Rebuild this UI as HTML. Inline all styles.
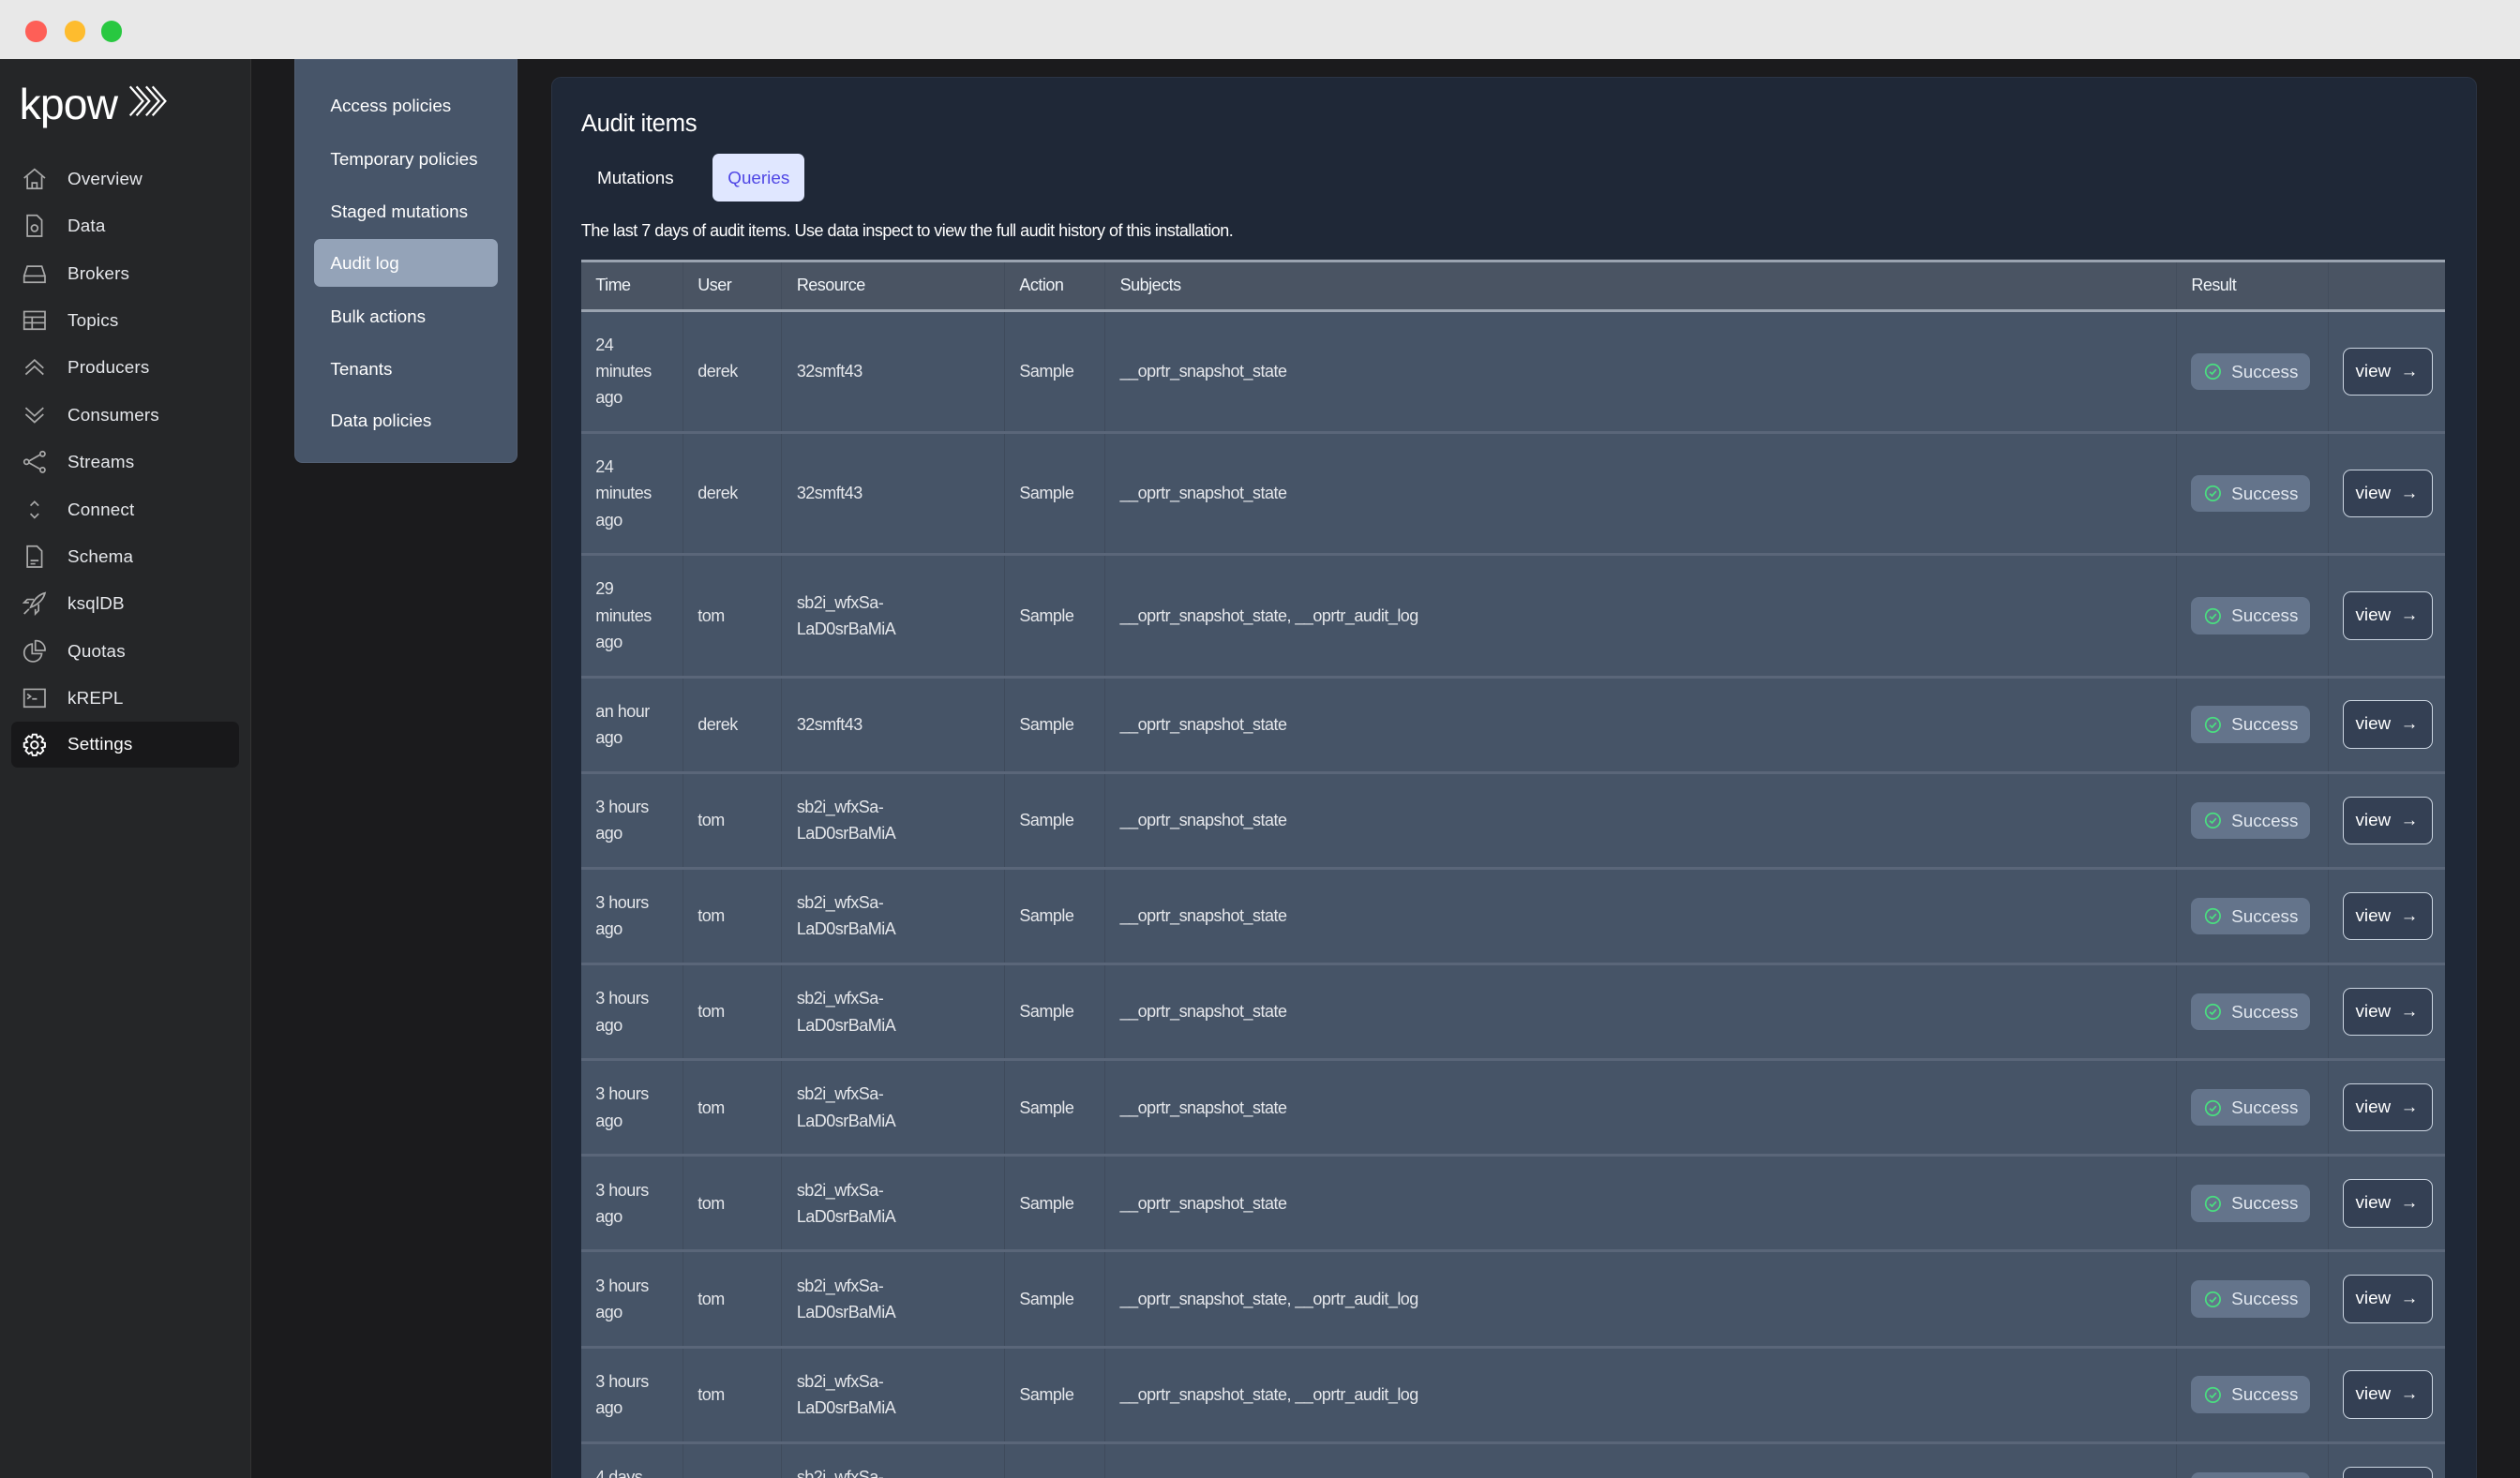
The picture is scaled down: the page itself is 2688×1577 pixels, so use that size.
<!DOCTYPE html>
<html><head><meta charset="utf-8"><style>
html,body{margin:0;padding:0;overflow:hidden;background:#1b1b1d}
#root{zoom:1.71429;width:1568px;height:920px;position:relative;font-family:"Liberation Sans",sans-serif;color:#e5e7eb;overflow:hidden;background:#1b1b1d}
.title{position:absolute;left:0;top:0;width:1568px;height:37px;background:#e8e8e8}
.dot{position:absolute;top:13px;width:13px;height:13px;border-radius:50%}
.side{position:absolute;left:0;top:37px;width:156px;height:883px;background:#252628;border-right:1px solid #333}
.logo{position:absolute;left:12px;top:12px;font-size:27px;color:#fff;letter-spacing:-0.5px;font-weight:500}
.nav{position:absolute;left:7px;width:142px;height:29px;font-size:11px;color:#e5e7eb;letter-spacing:0.1px}
.nav span{position:absolute;left:35px;top:8px}
.nav svg{position:absolute;left:7px;top:7px}
.sub{position:absolute;left:183px;top:37px;width:139px;height:251px;background:#475569;border-radius:0 0 5px 5px;border:1px solid #525f73;box-sizing:border-box}
.sub div{position:absolute;left:22px;font-size:11px;color:#fff}
.card{position:absolute;left:343px;top:48px;width:1197px;height:900px;background:#1f2837;border:1px solid #2b3444;border-radius:6px}
table{position:absolute;left:18px;top:113px;width:1160px;border-collapse:collapse;font-size:10.5px;letter-spacing:-0.3px}
th{background:#4a5463;text-align:left;font-weight:normal;height:29px;padding:0 0 0 9px;border-top:2px solid #9aa3b0;border-bottom:2px solid #9aa3b0;border-left:1px solid #434d5c;color:#f1f5f9}
td{background:#465467;padding:0 0 0 9px;border-bottom:2px solid #5a6679;border-left:1px solid #3f4b5c;line-height:16.5px;color:#e5e7eb}
th:first-child,td:first-child{border-left:none}
tr.b{height:76px}
tr.s{height:59.6px}
.badge{display:inline-block;background:#64748b;border-radius:5px;height:23px;width:74px;box-sizing:border-box;padding-left:8px;line-height:23px;font-size:11px;color:#e2e8f0;letter-spacing:0}
.badge svg{vertical-align:-2px;margin-right:6px}
.view{display:inline-block;background:#344054;border:1px solid #cbd5e1;border-radius:5px;height:30px;width:56px;box-sizing:border-box;padding-left:7px;line-height:28px;font-size:11px;color:#fff;letter-spacing:0}
</style></head><body><div id="root">
<div class="title"><div class="dot" style="left:16px;background:#fe5f57"></div><div class="dot" style="left:40px;background:#febc2e"></div><div class="dot" style="left:63px;background:#28c840"></div></div>
<div class="side">
<div class="logo">kpow <svg width="26" height="22" viewBox="0 0 26 22" style="vertical-align:0px"><g fill="none" stroke="#fff" stroke-width="1.3"><path d="M1 2 L9 11 L1 20 M5 2 L13 11 L5 20"/><path d="M11 2 L19 11 L11 20 M15 2 L23 11 L15 20"/></g></svg></div>
</div>
<div class="nav" style="top:97px"><svg width="15" height="15" viewBox="0 0 15 15" fill="none" stroke="#aaa" stroke-width="1"><path d="M1 7 L7.5 1.5 L14 7 M3 6 V13.5 H12 V6 M6 13.5 V10 H9 V13.5"/></svg><span>Overview</span></div>
<div class="nav" style="top:126px"><svg width="15" height="15" viewBox="0 0 15 15" fill="none" stroke="#aaa" stroke-width="1"><path d="M3 1 H9 L12 4 V14 H3 Z"/><circle cx="7.5" cy="9" r="2"/></svg><span>Data</span></div>
<div class="nav" style="top:156px"><svg width="15" height="15" viewBox="0 0 15 15" fill="none" stroke="#aaa" stroke-width="1"><path d="M1 9 L3 3 H12 L14 9 V13 H1 Z M1 9 H14"/></svg><span>Brokers</span></div>
<div class="nav" style="top:185px"><svg width="15" height="15" viewBox="0 0 15 15" fill="none" stroke="#aaa" stroke-width="1"><path d="M1 2 H14 V13 H1 Z M1 5.5 H14 M1 9 H14 M6 5.5 V13"/></svg><span>Topics</span></div>
<div class="nav" style="top:214px"><svg width="15" height="15" viewBox="0 0 15 15" fill="none" stroke="#aaa" stroke-width="1"><path d="M2 8 L7.5 3 L13 8 M2 12 L7.5 7 L13 12"/></svg><span>Producers</span></div>
<div class="nav" style="top:244px"><svg width="15" height="15" viewBox="0 0 15 15" fill="none" stroke="#aaa" stroke-width="1"><path d="M2 3 L7.5 8 L13 3 M2 7 L7.5 12 L13 7"/></svg><span>Consumers</span></div>
<div class="nav" style="top:273px"><svg width="15" height="15" viewBox="0 0 15 15" fill="none" stroke="#aaa" stroke-width="1"><circle cx="2.5" cy="7.5" r="1.5"/><circle cx="12.5" cy="2.5" r="1.5"/><circle cx="12.5" cy="12.5" r="1.5"/><path d="M4 7 L11 3 M4 8 L11 12"/></svg><span>Streams</span></div>
<div class="nav" style="top:303px"><svg width="15" height="15" viewBox="0 0 15 15" fill="none" stroke="#aaa" stroke-width="1"><path d="M5 5 L7.5 2.5 L10 5 M5 10 L7.5 12.5 L10 10"/></svg><span>Connect</span></div>
<div class="nav" style="top:332px"><svg width="15" height="15" viewBox="0 0 15 15" fill="none" stroke="#aaa" stroke-width="1"><path d="M3 1 H9 L12 4 V14 H3 Z M5 10 H10 M5 12 H8"/></svg><span>Schema</span></div>
<div class="nav" style="top:361px"><svg width="15" height="15" viewBox="0 0 15 15" fill="none" stroke="#aaa" stroke-width="1"><path d="M5 10 C7 5 10 2 14 1 C13 5 10 8 5 10 Z M4 7 H1 L3 5 H7 M8 11 V14 L10 12 V8 M4 11 L1 14"/></svg><span>ksqlDB</span></div>
<div class="nav" style="top:391px"><svg width="15" height="15" viewBox="0 0 15 15" fill="none" stroke="#aaa" stroke-width="1"><path d="M6 3 A5.5 5.5 0 1 0 12 9 H6 Z M8 1 A5.5 5.5 0 0 1 14 7 H8 Z"/></svg><span>Quotas</span></div>
<div class="nav" style="top:420px"><svg width="15" height="15" viewBox="0 0 15 15" fill="none" stroke="#aaa" stroke-width="1"><path d="M1 2 H14 V13 H1 Z M3 5 L5 6.5 L3 8 M6 8 H9"/></svg><span>kREPL</span></div>
<div class="nav" style="top:449px;background:#18181a;border-radius:4px"><svg width="15" height="15" viewBox="0 0 15 15" fill="none" stroke="#fff" stroke-width="1.1"><circle cx="7.5" cy="7.5" r="2.2"/><path d="M6.3 1 H8.7 L9.2 3 L11 2 L12.9 3.9 L12 5.7 L14 6.3 V8.7 L12 9.3 L13 11.1 L11.1 13 L9.3 12 L8.7 14 H6.3 L5.7 12 L3.9 13 L2 11.1 L3 9.3 L1 8.7 V6.3 L3 5.7 L2 3.9 L3.9 2 L5.7 3 Z"/></svg><span style="color:#fff">Settings</span></div>

<div class="sub">
<div style="top:22px">Access policies</div>
<div style="top:55px">Temporary policies</div>
<div style="top:88px">Staged mutations</div>
<div style="left:12px;top:111px;width:114px;height:30px;background:#94a3b8;border-radius:4px"></div>
<div style="top:120px">Audit log</div>
<div style="top:153px">Bulk actions</div>
<div style="top:186px">Tenants</div>
<div style="top:218px">Data policies</div>
</div>

<div class="card">
<div style="position:absolute;left:18px;top:20px;font-size:15px;color:#fff;letter-spacing:-0.2px">Audit items</div>
<div style="position:absolute;left:28px;top:56px;font-size:11px;color:#fff">Mutations</div>
<div style="position:absolute;left:100px;top:47px;width:57px;height:30px;background:#e0e7ff;border-radius:4px;color:#4f46e5;font-size:11px;line-height:30px;text-align:center">Queries</div>
<div style="position:absolute;left:18px;top:89px;font-size:10.5px;color:#fff;letter-spacing:-0.3px">The last 7 days of audit items. Use data inspect to view the full audit history of this installation.</div>
<table>
<tr><th style="width:54px">Time</th><th style="width:52px">User</th><th style="width:129px">Resource</th><th style="width:53px">Action</th><th style="width:657px">Subjects</th><th style="width:85px">Result</th><th></th></tr>
<tbody>
<tr class="b"><td>24<br>minutes<br>ago</td><td>derek</td><td>32smft43</td><td>Sample</td><td>__oprtr_snapshot_state</td><td><span class="badge"><svg width="11" height="11" viewBox="0 0 11 11" fill="none" stroke="#4ade80" stroke-width="1"><circle cx="5.5" cy="5.5" r="4.5"/><path d="M3.5 5.7 L5 7 L7.5 4.2"/></svg>Success</span></td><td><span class="view">view &nbsp;→</span></td></tr>
<tr class="b"><td>24<br>minutes<br>ago</td><td>derek</td><td>32smft43</td><td>Sample</td><td>__oprtr_snapshot_state</td><td><span class="badge"><svg width="11" height="11" viewBox="0 0 11 11" fill="none" stroke="#4ade80" stroke-width="1"><circle cx="5.5" cy="5.5" r="4.5"/><path d="M3.5 5.7 L5 7 L7.5 4.2"/></svg>Success</span></td><td><span class="view">view &nbsp;→</span></td></tr>
<tr class="b"><td>29<br>minutes<br>ago</td><td>tom</td><td>sb2i_wfxSa-<br>LaD0srBaMiA</td><td>Sample</td><td>__oprtr_snapshot_state, __oprtr_audit_log</td><td><span class="badge"><svg width="11" height="11" viewBox="0 0 11 11" fill="none" stroke="#4ade80" stroke-width="1"><circle cx="5.5" cy="5.5" r="4.5"/><path d="M3.5 5.7 L5 7 L7.5 4.2"/></svg>Success</span></td><td><span class="view">view &nbsp;→</span></td></tr>
<tr class="s"><td>an hour<br>ago</td><td>derek</td><td>32smft43</td><td>Sample</td><td>__oprtr_snapshot_state</td><td><span class="badge"><svg width="11" height="11" viewBox="0 0 11 11" fill="none" stroke="#4ade80" stroke-width="1"><circle cx="5.5" cy="5.5" r="4.5"/><path d="M3.5 5.7 L5 7 L7.5 4.2"/></svg>Success</span></td><td><span class="view">view &nbsp;→</span></td></tr>
<tr class="s"><td>3 hours<br>ago</td><td>tom</td><td>sb2i_wfxSa-<br>LaD0srBaMiA</td><td>Sample</td><td>__oprtr_snapshot_state</td><td><span class="badge"><svg width="11" height="11" viewBox="0 0 11 11" fill="none" stroke="#4ade80" stroke-width="1"><circle cx="5.5" cy="5.5" r="4.5"/><path d="M3.5 5.7 L5 7 L7.5 4.2"/></svg>Success</span></td><td><span class="view">view &nbsp;→</span></td></tr>
<tr class="s"><td>3 hours<br>ago</td><td>tom</td><td>sb2i_wfxSa-<br>LaD0srBaMiA</td><td>Sample</td><td>__oprtr_snapshot_state</td><td><span class="badge"><svg width="11" height="11" viewBox="0 0 11 11" fill="none" stroke="#4ade80" stroke-width="1"><circle cx="5.5" cy="5.5" r="4.5"/><path d="M3.5 5.7 L5 7 L7.5 4.2"/></svg>Success</span></td><td><span class="view">view &nbsp;→</span></td></tr>
<tr class="s"><td>3 hours<br>ago</td><td>tom</td><td>sb2i_wfxSa-<br>LaD0srBaMiA</td><td>Sample</td><td>__oprtr_snapshot_state</td><td><span class="badge"><svg width="11" height="11" viewBox="0 0 11 11" fill="none" stroke="#4ade80" stroke-width="1"><circle cx="5.5" cy="5.5" r="4.5"/><path d="M3.5 5.7 L5 7 L7.5 4.2"/></svg>Success</span></td><td><span class="view">view &nbsp;→</span></td></tr>
<tr class="s"><td>3 hours<br>ago</td><td>tom</td><td>sb2i_wfxSa-<br>LaD0srBaMiA</td><td>Sample</td><td>__oprtr_snapshot_state</td><td><span class="badge"><svg width="11" height="11" viewBox="0 0 11 11" fill="none" stroke="#4ade80" stroke-width="1"><circle cx="5.5" cy="5.5" r="4.5"/><path d="M3.5 5.7 L5 7 L7.5 4.2"/></svg>Success</span></td><td><span class="view">view &nbsp;→</span></td></tr>
<tr class="s"><td>3 hours<br>ago</td><td>tom</td><td>sb2i_wfxSa-<br>LaD0srBaMiA</td><td>Sample</td><td>__oprtr_snapshot_state</td><td><span class="badge"><svg width="11" height="11" viewBox="0 0 11 11" fill="none" stroke="#4ade80" stroke-width="1"><circle cx="5.5" cy="5.5" r="4.5"/><path d="M3.5 5.7 L5 7 L7.5 4.2"/></svg>Success</span></td><td><span class="view">view &nbsp;→</span></td></tr>
<tr class="s"><td>3 hours<br>ago</td><td>tom</td><td>sb2i_wfxSa-<br>LaD0srBaMiA</td><td>Sample</td><td>__oprtr_snapshot_state, __oprtr_audit_log</td><td><span class="badge"><svg width="11" height="11" viewBox="0 0 11 11" fill="none" stroke="#4ade80" stroke-width="1"><circle cx="5.5" cy="5.5" r="4.5"/><path d="M3.5 5.7 L5 7 L7.5 4.2"/></svg>Success</span></td><td><span class="view">view &nbsp;→</span></td></tr>
<tr class="s"><td>3 hours<br>ago</td><td>tom</td><td>sb2i_wfxSa-<br>LaD0srBaMiA</td><td>Sample</td><td>__oprtr_snapshot_state, __oprtr_audit_log</td><td><span class="badge"><svg width="11" height="11" viewBox="0 0 11 11" fill="none" stroke="#4ade80" stroke-width="1"><circle cx="5.5" cy="5.5" r="4.5"/><path d="M3.5 5.7 L5 7 L7.5 4.2"/></svg>Success</span></td><td><span class="view">view &nbsp;→</span></td></tr>
<tr class="s"><td>4 days<br>ago</td><td>tom</td><td>sb2i_wfxSa-<br>LaD0srBaMiA</td><td>Sample</td><td>__oprtr_snapshot_state</td><td><span class="badge"><svg width="11" height="11" viewBox="0 0 11 11" fill="none" stroke="#4ade80" stroke-width="1"><circle cx="5.5" cy="5.5" r="4.5"/><path d="M3.5 5.7 L5 7 L7.5 4.2"/></svg>Success</span></td><td><span class="view">view &nbsp;→</span></td></tr>
</tbody></table>
</div>
</div></body></html>
